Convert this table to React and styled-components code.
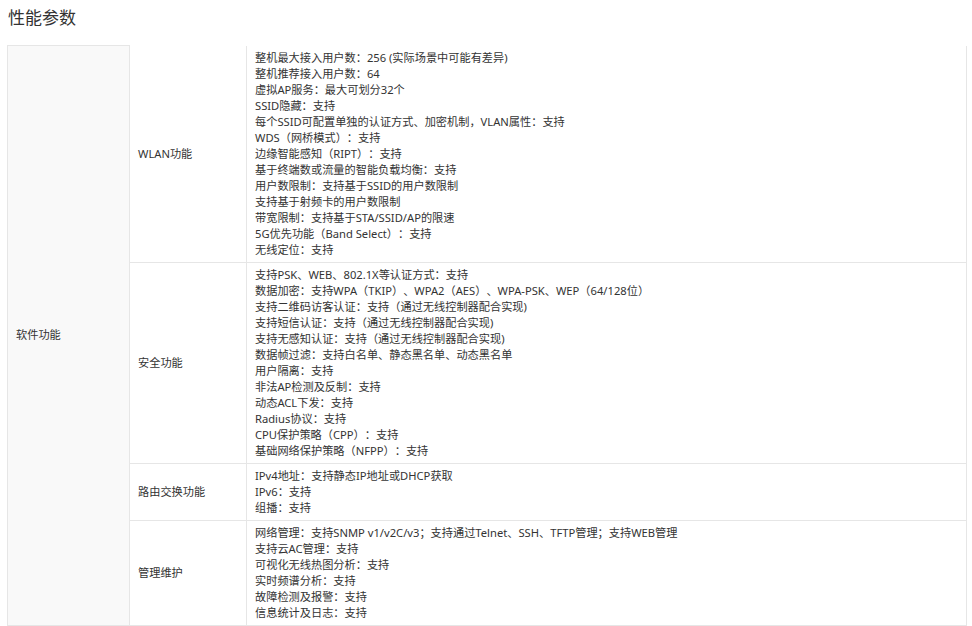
import React from "react";
import styled, { createGlobalStyle } from "styled-components";

const Global = createGlobalStyle`
  html, body { margin: 0; padding: 0; background: #fff; }
  body {
    font-family: "Noto Sans", "Noto Sans CJK SC", sans-serif;
    color: #333;
    text-spacing-trim: space-all;
  }
`;

const Page = styled.div`
  padding: 5px 0 0 7px;
  width: 960px;
`;

const Title = styled.h2`
  margin: 0 0 14px 1px;
  font-size: 17px;
  line-height: 26px;
  font-weight: normal;
  color: #333;
`;

const Table = styled.table`
  width: 960px;
  border-collapse: collapse;
  table-layout: fixed;
  font-size: 11.2px;
  line-height: 16px;
  color: #333;
`;

const Cell = styled.td`
  border: 1px solid #e6e6e6;
  padding: 4px 8px;
  vertical-align: middle;
  ${(p) => (p.$noTop ? "border-top: none;" : "")}
  ${(p) => (p.$head ? "background: #f9f9f9;" : "")}
`;

const Line = styled.div`
  white-space: nowrap;
  height: 16px;
`;

const groups = [
  {
    name: "WLAN功能",
    items: [
      "整机最大接入用户数：256 (实际场景中可能有差异)",
      "整机推荐接入用户数：64",
      "虚拟AP服务：最大可划分32个",
      "SSID隐藏：支持",
      "每个SSID可配置单独的认证方式、加密机制，VLAN属性：支持",
      "WDS（网桥模式）：支持",
      "边缘智能感知（RIPT）：支持",
      "基于终端数或流量的智能负载均衡：支持",
      "用户数限制：支持基于SSID的用户数限制",
      "支持基于射频卡的用户数限制",
      "带宽限制：支持基于STA/SSID/AP的限速",
      "5G优先功能（Band Select）：支持",
      "无线定位：支持",
    ],
  },
  {
    name: "安全功能",
    items: [
      "支持PSK、WEB、802.1X等认证方式：支持",
      "数据加密：支持WPA（TKIP）、WPA2（AES）、WPA-PSK、WEP（64/128位）",
      "支持二维码访客认证：支持（通过无线控制器配合实现)",
      "支持短信认证：支持（通过无线控制器配合实现)",
      "支持无感知认证：支持（通过无线控制器配合实现)",
      "数据帧过滤：支持白名单、静态黑名单、动态黑名单",
      "用户隔离：支持",
      "非法AP检测及反制：支持",
      "动态ACL下发：支持",
      "Radius协议：支持",
      "CPU保护策略（CPP）：支持",
      "基础网络保护策略（NFPP）：支持",
    ],
  },
  {
    name: "路由交换功能",
    items: ["IPv4地址：支持静态IP地址或DHCP获取", "IPv6：支持", "组播：支持"],
  },
  {
    name: "管理维护",
    items: [
      "网络管理：支持SNMP v1/v2C/v3；支持通过Telnet、SSH、TFTP管理；支持WEB管理",
      "支持云AC管理：支持",
      "可视化无线热图分析：支持",
      "实时频谱分析：支持",
      "故障检测及报警：支持",
      "信息统计及日志：支持",
    ],
  },
];

export default function App() {
  return (
    <>
      <Global />
      <Page>
        <Title>性能参数</Title>
        <Table>
          <colgroup>
            <col style={{ width: 122 }} />
            <col style={{ width: 117 }} />
            <col />
          </colgroup>
          <tbody>
            {groups.map((g, i) => (
              <tr key={g.name}>
                {i === 0 && (
                  <Cell $head rowSpan={groups.length}>
                    软件功能
                  </Cell>
                )}
                <Cell $noTop={i === 0}>{g.name}</Cell>
                <Cell $noTop={i === 0}>
                  {g.items.map((t) => (
                    <Line key={t}>{t}</Line>
                  ))}
                </Cell>
              </tr>
            ))}
          </tbody>
        </Table>
      </Page>
    </>
  );
}
